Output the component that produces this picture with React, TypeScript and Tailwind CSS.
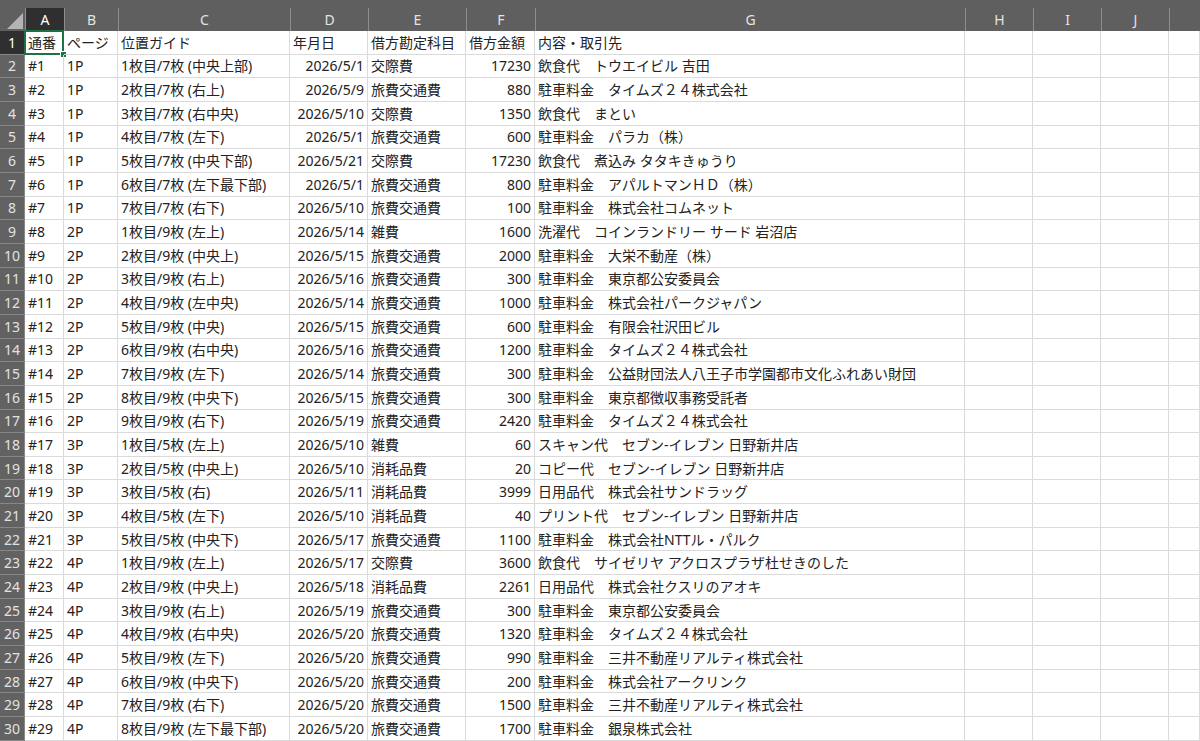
import React from "react";

type Row = [string, string, string, string, string, string, string];

const head: Row = ["通番", "ページ", "位置ガイド", "年月日", "借方勘定科目", "借方金額", "内容・取引先"];

const rows: Row[] = [
  ["#1", "1P", "1枚目/7枚 (中央上部)", "2026/5/1", "交際費", "17230", "飲食代　トウエイビル 吉田"],
  ["#2", "1P", "2枚目/7枚 (右上)", "2026/5/9", "旅費交通費", "880", "駐車料金　タイムズ２４株式会社"],
  ["#3", "1P", "3枚目/7枚 (右中央)", "2026/5/10", "交際費", "1350", "飲食代　まとい"],
  ["#4", "1P", "4枚目/7枚 (左下)", "2026/5/1", "旅費交通費", "600", "駐車料金　パラカ（株）"],
  ["#5", "1P", "5枚目/7枚 (中央下部)", "2026/5/21", "交際費", "17230", "飲食代　煮込み タタキきゅうり"],
  ["#6", "1P", "6枚目/7枚 (左下最下部)", "2026/5/1", "旅費交通費", "800", "駐車料金　アパルトマンＨＤ（株）"],
  ["#7", "1P", "7枚目/7枚 (右下)", "2026/5/10", "旅費交通費", "100", "駐車料金　株式会社コムネット"],
  ["#8", "2P", "1枚目/9枚 (左上)", "2026/5/14", "雑費", "1600", "洗濯代　コインランドリー サード 岩沼店"],
  ["#9", "2P", "2枚目/9枚 (中央上)", "2026/5/15", "旅費交通費", "2000", "駐車料金　大栄不動産（株）"],
  ["#10", "2P", "3枚目/9枚 (右上)", "2026/5/16", "旅費交通費", "300", "駐車料金　東京都公安委員会"],
  ["#11", "2P", "4枚目/9枚 (左中央)", "2026/5/14", "旅費交通費", "1000", "駐車料金　株式会社パークジャパン"],
  ["#12", "2P", "5枚目/9枚 (中央)", "2026/5/15", "旅費交通費", "600", "駐車料金　有限会社沢田ビル"],
  ["#13", "2P", "6枚目/9枚 (右中央)", "2026/5/16", "旅費交通費", "1200", "駐車料金　タイムズ２４株式会社"],
  ["#14", "2P", "7枚目/9枚 (左下)", "2026/5/14", "旅費交通費", "300", "駐車料金　公益財団法人八王子市学園都市文化ふれあい財団"],
  ["#15", "2P", "8枚目/9枚 (中央下)", "2026/5/15", "旅費交通費", "300", "駐車料金　東京都徴収事務受託者"],
  ["#16", "2P", "9枚目/9枚 (右下)", "2026/5/19", "旅費交通費", "2420", "駐車料金　タイムズ２４株式会社"],
  ["#17", "3P", "1枚目/5枚 (左上)", "2026/5/10", "雑費", "60", "スキャン代　セブン-イレブン 日野新井店"],
  ["#18", "3P", "2枚目/5枚 (中央上)", "2026/5/10", "消耗品費", "20", "コピー代　セブン-イレブン 日野新井店"],
  ["#19", "3P", "3枚目/5枚 (右)", "2026/5/11", "消耗品費", "3999", "日用品代　株式会社サンドラッグ"],
  ["#20", "3P", "4枚目/5枚 (左下)", "2026/5/10", "消耗品費", "40", "プリント代　セブン-イレブン 日野新井店"],
  ["#21", "3P", "5枚目/5枚 (中央下)", "2026/5/17", "旅費交通費", "1100", "駐車料金　株式会社NTTル・パルク"],
  ["#22", "4P", "1枚目/9枚 (左上)", "2026/5/17", "交際費", "3600", "飲食代　サイゼリヤ アクロスプラザ杜せきのした"],
  ["#23", "4P", "2枚目/9枚 (中央上)", "2026/5/18", "消耗品費", "2261", "日用品代　株式会社クスリのアオキ"],
  ["#24", "4P", "3枚目/9枚 (右上)", "2026/5/19", "旅費交通費", "300", "駐車料金　東京都公安委員会"],
  ["#25", "4P", "4枚目/9枚 (右中央)", "2026/5/20", "旅費交通費", "1320", "駐車料金　タイムズ２４株式会社"],
  ["#26", "4P", "5枚目/9枚 (左下)", "2026/5/20", "旅費交通費", "990", "駐車料金　三井不動産リアルティ株式会社"],
  ["#27", "4P", "6枚目/9枚 (中央下)", "2026/5/20", "旅費交通費", "200", "駐車料金　株式会社アークリンク"],
  ["#28", "4P", "7枚目/9枚 (右下)", "2026/5/20", "旅費交通費", "1500", "駐車料金　三井不動産リアルティ株式会社"],
  ["#29", "4P", "8枚目/9枚 (左下最下部)", "2026/5/20", "旅費交通費", "1700", "駐車料金　銀泉株式会社"],
];

const cols = "grid grid-cols-[25px_39px_54px_172px_78px_98px_69px_430px_68px_68px_68px_1fr]";
const letters = ["A", "B", "C", "D", "E", "F", "G", "H", "I", "J", ""];

// D (date) and F (amount) hold numbers, so they sit on the right
const rightAligned = [false, false, false, true, false, true, false];

function ColumnHeader() {
  return (
    <div className="bg-[#5f5f5f] pt-2">
      <div className={`${cols} h-[23px]`}>
        <div className="relative">
          <div className="absolute right-[2px] bottom-[2px] w-0 h-0 border-l-[16px] border-l-transparent border-b-[16px] border-b-[#b4b4b4]" />
        </div>
        {letters.map((l, i) => (
          <div
            key={i}
            className={`flex items-center justify-center border-l border-[#8d8d8d] text-[14px] ${
              i === 0 ? "bg-[#2f2f2f] text-white" : "text-[#e4e4e4]"
            }`}
          >
            {l}
          </div>
        ))}
      </div>
    </div>
  );
}

function SheetRow({ n, cells, bold }: { n: number; cells: Row; bold?: boolean }) {
  return (
    <div className={`${cols} h-[23.66px]`}>
      <div
        className={`flex items-center justify-center border-b border-r border-[#878787] text-[14px] ${
          bold ? "bg-[#2f2f2f] text-white" : "bg-[#626262] text-[#e2e2e2]"
        }`}
      >
        {n}
      </div>
      {cells.map((c, i) => (
        <div
          key={i}
          className={`relative flex items-center px-[3px] border-r border-b border-[#dadada] whitespace-nowrap text-[#222] text-[14px] ${
            rightAligned[i] && n > 1 ? "justify-end" : ""
          }`}
        >
          {c}
          {n === 1 && i === 0 && (
            <div className="absolute -left-px -top-px right-[-1px] bottom-[-1px] border-2 border-[#1e7145] pointer-events-none">
              <div className="absolute -right-[5px] -bottom-[5px] w-[7px] h-[7px] bg-[#1e7145] border border-white" />
            </div>
          )}
        </div>
      ))}
      {[0, 1, 2, 3].map((k) => (
        <div key={k} className="border-r border-b border-[#dadada]" />
      ))}
    </div>
  );
}

export default function App() {
  return (
    <div
      className="w-[1200px] h-[741px] overflow-hidden bg-white select-none"
      style={{ fontFamily: '"Noto Sans", "Noto Sans CJK JP", sans-serif' }}
    >
      <ColumnHeader />
      <SheetRow n={1} cells={head} bold />
      {rows.map((r, i) => (
        <SheetRow key={i} n={i + 2} cells={r} />
      ))}
    </div>
  );
}
